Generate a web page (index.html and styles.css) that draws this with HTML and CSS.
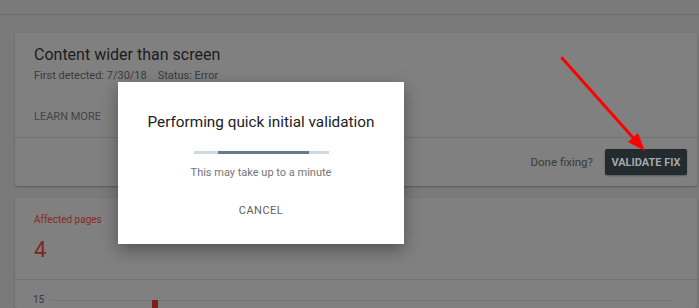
FILE: index.html
```html
<!DOCTYPE html>
<html lang="en">
<head>
<meta charset="utf-8">
<title>Validate fix</title>
<link rel="stylesheet" href="styles.css">
</head>
<body>
<header class="topbar"></header>
<main class="content">
  <section class="card issue">
    <div class="issue-head">
      <h1 class="issue-title">Content wider than screen</h1>
      <p class="issue-meta"><span class="meta-item">First detected: 7/30/18</span><span class="meta-item">Status: Error</span></p>
      <div class="issue-links"><a class="link-btn">LEARN MORE</a></div>
    </div>
    <div class="issue-foot">
      <span class="done-label">Done fixing?</span>
      <button class="validate-btn">VALIDATE FIX</button>
    </div>
  </section>
  <section class="card stats">
    <div class="stats-head">
      <div class="stat-label">Affected pages</div>
      <div class="stat-value">4</div>
    </div>
    <div class="chart">
      <div class="chart-row">
        <span class="axis-label">15</span>
        <div class="gridline"><div class="bar" style="left: 102px;"></div></div>
      </div>
    </div>
  </section>
</main>

<div class="dialog" role="dialog">
  <h2 class="dialog-title">Performing quick initial validation</h2>
  <div class="progress"><div class="progress-fill"></div></div>
  <p class="dialog-text">This may take up to a minute</p>
  <button class="cancel-btn">CANCEL</button>
</div>

<svg class="annotation" width="699" height="308" viewBox="0 0 699 308">
  <line x1="562" y1="58" x2="636" y2="141" stroke="#ff0000" stroke-width="3" stroke-linecap="round"/>
  <polygon points="645,151 638,133 628,142" fill="#ff0000"/>
</svg>
</body>
</html>
```

FILE: styles.css
```css
* { box-sizing: border-box; }

html, body {
  margin: 0;
  padding: 0;
}

body {
  width: 699px;
  height: 308px;
  overflow: hidden;
  background: #7a7a7a;
  font-family: Roboto, "Liberation Sans", Arial, sans-serif;
  position: relative;
}

.topbar {
  height: 15px;
  border-bottom: 1px solid #6d6d6d;
}

.content {
  padding: 18px 2px 0 15px;
}

.card {
  background: #808080;
  box-shadow: 0 1px 2px rgba(0, 0, 0, 0.28);
  border-radius: 2px;
}

.issue { margin-bottom: 12px; }

.issue-head {
  padding: 12px 19px 12px 19px;
  border-bottom: 1px solid #727272;
}

.issue-title {
  margin: 0;
  font-size: 16px;
  line-height: 20px;
  font-weight: 400;
  color: #1c1c1c;
}

.issue-meta {
  margin: 3px 0 0;
  font-size: 11px;
  line-height: 16px;
  color: #3b3b3b;
}

.meta-item { margin-right: 11px; }

.issue-links {
  margin-top: 25px;
  font-size: 11px;
  line-height: 16px;
}

.link-btn {
  color: #444444;
  font-weight: 400;
  letter-spacing: 0;
}

.issue-foot {
  height: 48px;
  display: flex;
  align-items: center;
  justify-content: flex-end;
  gap: 12px;
  padding-right: 10px;
}

.done-label {
  font-size: 11.5px;
  color: #3a3a3a;
}

.validate-btn {
  height: 26px;
  width: 82px;
  padding: 0;
  border: 0;
  border-radius: 2px;
  background: #232b2f;
  color: #a3a7a9;
  font-family: inherit;
  font-size: 11px;
  font-weight: 700;
  letter-spacing: 0;
  box-shadow: 0 1px 2px rgba(0, 0, 0, 0.3);
}

.stats { height: 110px; }

.stats-head {
  padding: 15px 19px 0;
  height: 82px;
  border-bottom: 1px solid #727272;
}

.stat-label {
  font-size: 10px;
  line-height: 14px;
  color: #8a2a22;
}

.stat-value {
  margin-top: 9px;
  font-size: 22px;
  line-height: 28px;
  color: #7f2620;
}

.chart { padding: 14px 25px 0 18px; }

.chart-row {
  display: flex;
  align-items: center;
  gap: 6px;
}

.axis-label {
  font-size: 10px;
  line-height: 12px;
  color: #3a3a3a;
}

.gridline {
  flex: 1;
  height: 1px;
  background: #767676;
  position: relative;
}

.bar {
  position: absolute;
  top: 0;
  width: 6px;
  height: 8px;
  background: #7d1f1c;
}

.dialog {
  position: absolute;
  left: 118px;
  top: 82px;
  width: 286px;
  height: 162px;
  background: #ffffff;
  box-shadow: 0 6px 16px rgba(0, 0, 0, 0.35);
  display: flex;
  flex-direction: column;
  align-items: center;
  padding-top: 30px;
}

.dialog-title {
  margin: 0;
  font-size: 15.3px;
  line-height: 20px;
  font-weight: 400;
  color: #212121;
}

.progress {
  margin-top: 19px;
  width: 135px;
  height: 3px;
  background: #cfd8dc;
  position: relative;
}

.progress-fill {
  position: absolute;
  left: 24px;
  top: 0;
  width: 91px;
  height: 3px;
  background: #607d8b;
}

.dialog-text {
  margin: 11px 0 0;
  font-size: 11px;
  line-height: 16px;
  color: #757575;
}

.cancel-btn {
  margin-top: 22px;
  border: 0;
  background: transparent;
  padding: 0;
  font-family: inherit;
  font-size: 11px;
  line-height: 16px;
  font-weight: 400;
  color: #616161;
  letter-spacing: 0.5px;
}

.annotation {
  position: absolute;
  left: 0;
  top: 0;
  pointer-events: none;
}
```
